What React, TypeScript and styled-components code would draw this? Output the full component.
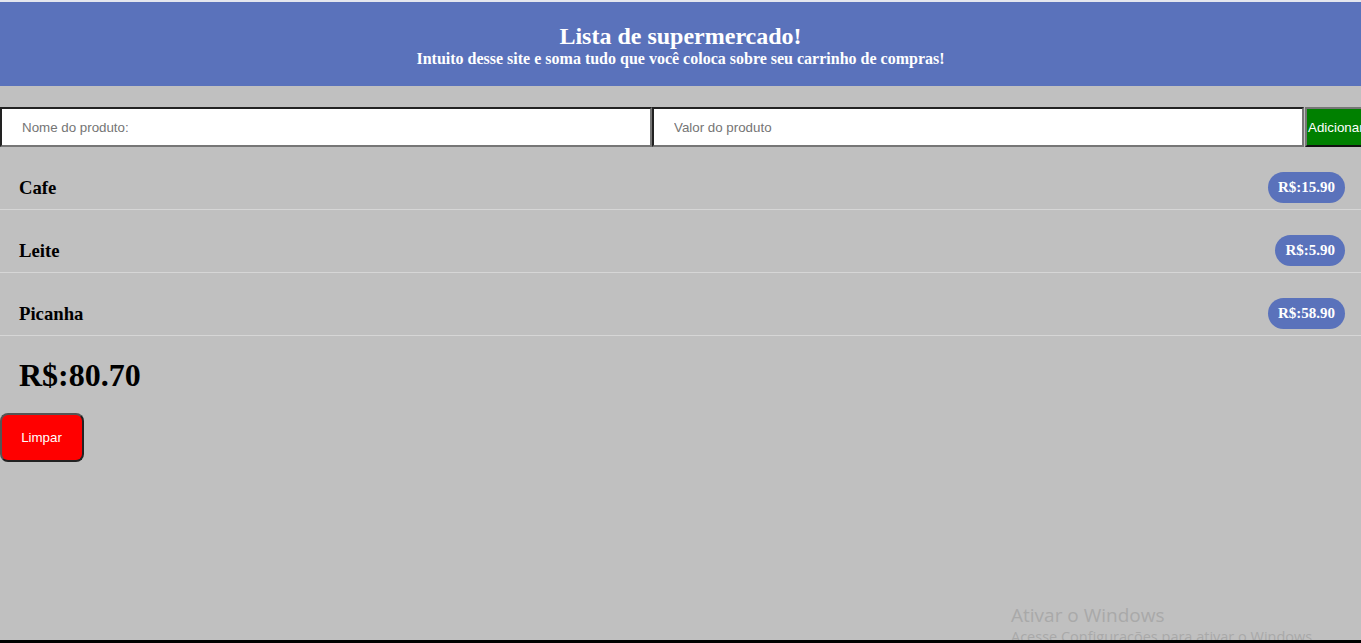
import React from "react";
import styled, { createGlobalStyle } from "styled-components";

const Global = createGlobalStyle`
  html, body { margin: 0; padding: 0; }
  body {
    background: #c0c0c0;
    font-family: "Liberation Serif", "Times New Roman", serif;
    overflow: hidden;
  }
`;

const Page = styled.div`
  position: relative;
  min-height: 640px;
  border-bottom: 3px solid #000;
  overflow: hidden;
`;

const Header = styled.header`
  background: #5a72bb;
  border-top: 2px solid #e4e6ee;
  padding: 20px 0 18px;
  text-align: center;
  color: #fff;
`;

const Title = styled.h2`
  margin: 0;
  font-size: 24px;
  line-height: 28px;
  font-weight: bold;
`;

const Subtitle = styled.p`
  margin: 0;
  font-size: 16px;
  line-height: 18px;
  font-weight: bold;
`;

const Form = styled.form`
  display: flex;
  margin-top: 21px;
  width: 1400px;
`;

const Input = styled.input`
  box-sizing: border-box;
  flex: 0 0 652px;
  height: 40px;
  margin: 0;
  padding: 0 20px;
  border: 2px solid;
  border-color: #222 #767676 #767676 #222;
  background: #fff;
  font-family: "Liberation Sans", Arial, sans-serif;
  font-size: 13.333px;
  &::placeholder { color: #757575; }
`;

const AddButton = styled.button`
  box-sizing: border-box;
  height: 40px;
  margin: 0 0 0 1px;
  padding: 0 1px;
  background: #008000;
  color: #fff;
  border: 2px solid;
  border-color: #767676 #111 #111 #767676;
  font-family: "Liberation Sans", Arial, sans-serif;
  font-size: 13.333px;
`;

const List = styled.ul`
  list-style: none;
  margin: 0;
  padding: 0;
`;

const Item = styled.li`
  display: flex;
  align-items: center;
  justify-content: space-between;
  height: 42px;
  padding: 20px 16px 0 19px;
  border-bottom: 1px solid #d6d6d6;
`;

const ItemName = styled.h3`
  margin: 0;
  font-size: 18.72px;
  font-weight: bold;
  color: #000;
`;

const Price = styled.span`
  display: inline-flex;
  align-items: center;
  height: 31px;
  margin-top: -2px;
  padding: 0 10px;
  border-radius: 16px;
  background: #5a72bb;
  color: #fff;
  font-size: 15px;
  font-weight: bold;
`;

const Total = styled.h1`
  margin: 21px 0 19px 19px;
  font-size: 32px;
  line-height: 37px;
  font-weight: bold;
  color: #000;
`;

const ClearButton = styled.button`
  display: block;
  box-sizing: border-box;
  width: 84px;
  height: 49px;
  margin: 0;
  padding: 0 1px 0 0;
  background: #ff0000;
  color: #fff;
  border: 2px solid #222;
  border-top-color: #555;
  border-left-color: #555;
  border-radius: 8px;
  font-family: "Liberation Sans", Arial, sans-serif;
  font-size: 13.333px;
  text-align: center;
`;

const Watermark = styled.div`
  position: absolute;
  left: 1011px;
  top: 603px;
  color: #a9a9a9;
  font-family: "Open Sans", "Noto Sans", sans-serif;
  white-space: nowrap;
`;

const WatermarkTitle = styled.div`
  font-size: 19px;
  line-height: 24px;
`;

const WatermarkText = styled.div`
  font-size: 14.5px;
  line-height: 20px;
`;

const items = [
  { name: "Cafe", price: "15.90" },
  { name: "Leite", price: "5.90" },
  { name: "Picanha", price: "58.90" },
];

export default function App() {
  return (
    <>
      <Global />
      <Page>
        <Header>
          <Title>Lista de supermercado!</Title>
          <Subtitle>
            Intuito desse site e soma tudo que você coloca sobre seu carrinho de compras!
          </Subtitle>
        </Header>
        <Form onSubmit={(e) => e.preventDefault()}>
          <Input placeholder="Nome do produto:" />
          <Input placeholder="Valor do produto" />
          <AddButton type="submit">Adicionar</AddButton>
        </Form>
        <List>
          {items.map((it) => (
            <Item key={it.name}>
              <ItemName>{it.name}</ItemName>
              <Price>R$:{it.price}</Price>
            </Item>
          ))}
        </List>
        <Total>R$:80.70</Total>
        <ClearButton type="button">Limpar</ClearButton>
        <Watermark>
          <WatermarkTitle>Ativar o Windows</WatermarkTitle>
          <WatermarkText>Acesse Configurações para ativar o Windows.</WatermarkText>
        </Watermark>
      </Page>
    </>
  );
}
